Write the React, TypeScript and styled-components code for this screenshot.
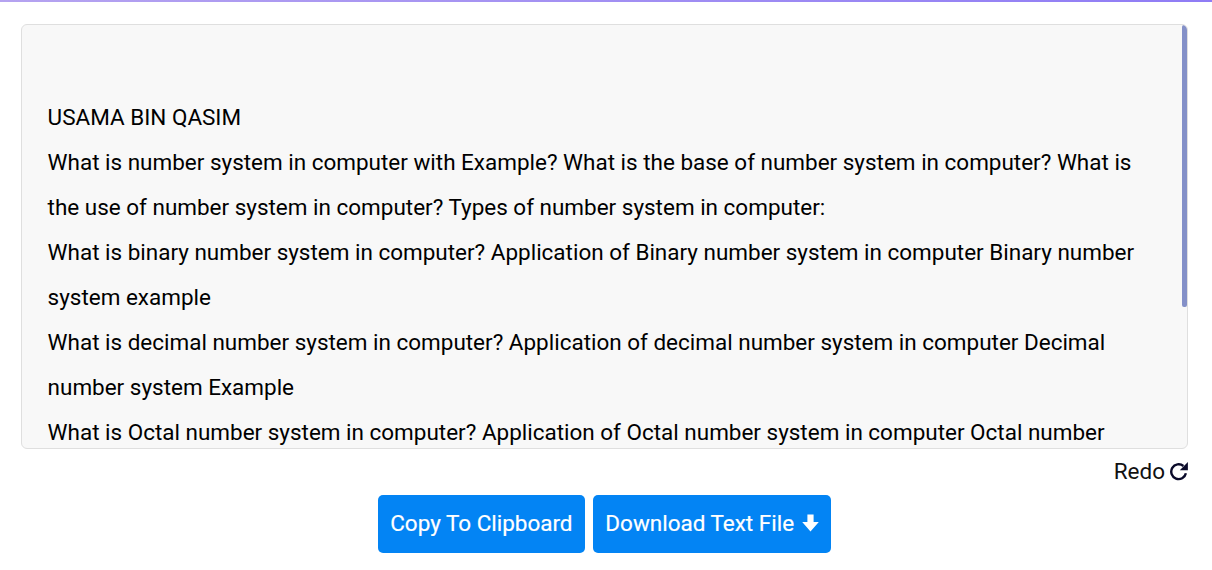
import React from "react";
import styled, { createGlobalStyle } from "styled-components";

const Global = createGlobalStyle`
  html, body { margin: 0; padding: 0; background: #fff; }
  body { font-family: Roboto, "Liberation Sans", sans-serif; color: #000; }
`;

const TopBar = styled.div`
  height: 2px;
  background: linear-gradient(90deg, #b5a3f0 0%, #8f7cf5 100%);
`;

const Page = styled.main`
  padding: 22px 24px 0 21px;
`;

const ResultFrame = styled.section`
  position: relative;
  box-sizing: border-box;
  height: 425px;
  background: #f8f8f8;
  border: 1px solid #dfdfdf;
  border-radius: 6px;
  overflow: hidden;
`;

const ResultText = styled.div`
  padding: 25px 0 27px 25.6px;
  font-size: 22.48px;
  line-height: 45px;
`;

const Thumb = styled.div`
  position: absolute;
  top: 0;
  right: 0;
  width: 5px;
  height: 282px;
  background: #8490c8;
  border-radius: 2px;
`;

const Line = styled.p`
  margin: 0;
  min-height: 45px;
  padding-right: 30px;
`;

const RedoRow = styled.div`
  display: flex;
  justify-content: flex-end;
  align-items: center;
  gap: 5px;
  height: 46px;
  padding-bottom: 2px;
  box-sizing: border-box;
  font-size: 22.48px;
  color: #111;
`;

const Actions = styled.div`
  display: flex;
  justify-content: center;
  gap: 8px;
`;

const ActionButton = styled.button`
  display: flex;
  align-items: center;
  gap: 7.7px;
  height: 58px;
  padding: 0 12.4px 2px;
  border: none;
  border-radius: 5px;
  background: #0384f4;
  color: #fff;
  font-family: inherit;
  font-size: 22.48px;
  -webkit-text-stroke: 0.2px #fff;
`;

const RedoIcon = () => (
  <svg width="18" height="20" viewBox="0 0 18 20" aria-hidden="true">
    <path d="M13.4 5 A7.4 7.4 0 1 0 15.9 12.2" fill="none" stroke="#0a0a2a" strokeWidth="2.4" />
    <path d="M9.8 9.2 H17.9 V1.1 Z" fill="#0a0a2a" />
  </svg>
);

const DownIcon = () => (
  <svg width="17" height="18" viewBox="0 0 17 18" aria-hidden="true">
    <path d="M5.4 0.5 H11.6 V8 H16.8 L8.5 17.6 L0.2 8 H5.4 Z" fill="#fff" />
  </svg>
);

const lines = [
  "",
  "USAMA BIN QASIM",
  "What is number system in computer with Example? What is the base of number system in computer? What is the use of number system in computer? Types of number system in computer:",
  "What is binary number system in computer? Application of Binary number system in computer Binary number system example",
  "What is decimal number system in computer? Application of decimal number system in computer Decimal number system Example",
  "What is Octal number system in computer? Application of Octal number system in computer Octal number system Example",
  "What is hexadecimal number system in computer? Application of hexadecimal number system in computer",
  "Conclusion",
];

export default function App() {
  return (
    <>
      <Global />
      <TopBar />
      <Page>
        <ResultFrame>
          <ResultText>
            {lines.map((l, i) => (
              <Line key={i}>{l}</Line>
            ))}
          </ResultText>
          <Thumb />
        </ResultFrame>
        <RedoRow>
          Redo <RedoIcon />
        </RedoRow>
        <Actions>
          <ActionButton>Copy To Clipboard</ActionButton>
          <ActionButton>
            Download Text File <DownIcon />
          </ActionButton>
        </Actions>
      </Page>
    </>
  );
}
